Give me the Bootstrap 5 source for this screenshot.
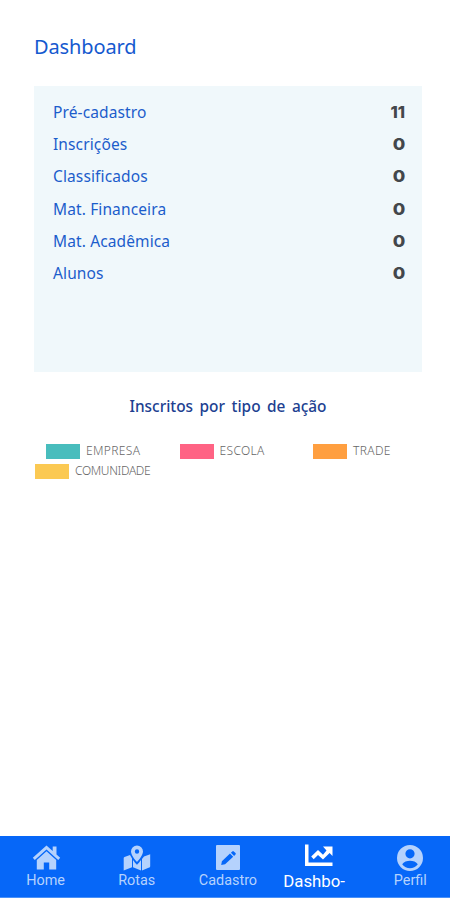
<!DOCTYPE html>
<html lang="pt-BR">
<head>
<meta charset="utf-8">
<meta name="viewport" content="width=device-width, initial-scale=1">
<title>Dashboard</title>
<link href="https://cdn.jsdelivr.net/npm/bootstrap@5.3.0/dist/css/bootstrap.min.css" rel="stylesheet">
<style>
body{font-family:"Noto Sans",sans-serif;background:#fff;overflow:hidden}
.screen{height:900px;padding-bottom:2.500px}
.content{padding:33px 28px 0 34px}
.page-title{font-size:20px;line-height:28px;color:#1559cf;letter-spacing:-.12px}
.summary{margin-top:24.500px;height:286px;background:#f0f8fb;padding:10.300px 17px 0 19px}
.stat{height:32.3px;font-size:15.500px;line-height:32px;color:#1c5dcb;letter-spacing:.12px}
.stat .value{font-family:Inter,sans-serif;font-weight:800;font-size:16.500px;line-height:33px;letter-spacing:0;color:#43474b}
.stat .digit{transform:scaleX(1.1);transform-origin:right}
.chart-title{margin-top:23px;font-size:15.400px;line-height:24px;color:#213f91;word-spacing:2.500px;font-weight:500}
.legend{margin-top:22.500px;font-size:12px;font-weight:300;color:#666;line-height:20px}
.legend-cell{width:133.500px;padding-left:12px;letter-spacing:.35px}
.legend-wide{padding-left:1px;letter-spacing:-.35px}
.swatch{width:34px;height:15px;margin-right:6px}
.swatch-teal{background:#48bdbd}.swatch-pink{background:#ff6384}.swatch-orange{background:#ff9f40}.swatch-yellow{background:#fbc953}
.tabs{height:62px;background:#0667f8;font-family:Roboto,sans-serif;border-bottom:1px solid #4a91f8}
.tab{width:91.2px;flex:none;color:#b5d2fd;font-size:14.400px;line-height:18px;padding-top:8.500px;text-decoration:none}
.tab svg{height:28px;display:block}
.tab.current{color:#fff;font-size:16.800px;padding-top:6px}
.current .tab-label{margin-right:10px;margin-top:2.500px}
</style>
</head>
<body>
<div class="screen d-flex flex-column">
<main class="content flex-grow-1">
  <h1 class="page-title fw-normal mb-0">Dashboard</h1>
  <section class="summary">
    <div class="stat d-flex justify-content-between"><span>Pré-cadastro</span><span class="value">11</span></div>
    <div class="stat d-flex justify-content-between"><span>Inscrições</span><span class="value digit">0</span></div>
    <div class="stat d-flex justify-content-between"><span>Classificados</span><span class="value digit">0</span></div>
    <div class="stat d-flex justify-content-between"><span>Mat. Financeira</span><span class="value digit">0</span></div>
    <div class="stat d-flex justify-content-between"><span>Mat. Acadêmica</span><span class="value digit">0</span></div>
    <div class="stat d-flex justify-content-between"><span>Alunos</span><span class="value digit">0</span></div>
  </section>
  <h2 class="chart-title text-center mb-0">Inscritos por tipo de ação</h2>
  <div class="legend">
    <div class="d-flex">
      <div class="legend-cell d-flex align-items-center flex-shrink-0"><span class="swatch swatch-teal"></span><span>EMPRESA</span></div>
      <div class="legend-cell d-flex align-items-center flex-shrink-0"><span class="swatch swatch-pink"></span><span>ESCOLA</span></div>
      <div class="legend-cell d-flex align-items-center flex-shrink-0"><span class="swatch swatch-orange"></span><span>TRADE</span></div>
    </div>
    <div class="legend-wide d-flex align-items-center"><span class="swatch swatch-yellow"></span><span>COMUNIDADE</span></div>
  </div>
</main>
<nav class="tabs d-flex">
  <a class="tab d-flex flex-column align-items-center" href="#"><svg width="30" viewBox="0 0 30 28" fill="currentColor"><path d="M15.500 1.500 1.800 13.700l2 2.300L15.500 5.600 27.200 16l2-2.300-3.700-3.200V2.500h-3.800v4.600z"/><path d="M15.500 7.300 5.800 16v9.500h7v-7h5.400v7h7V16z"/></svg><span class="tab-label">Home</span></a>
  <a class="tab d-flex flex-column align-items-center" href="#"><svg width="28" viewBox="0 0 28 28" fill="currentColor"><path fill-rule="evenodd" d="M14 1.500a6 6 0 0 0-6 6c0 3.500 4 8.500 6 10.500 2-2 6-7 6-10.500a6 6 0 0 0-6-6m0 3.800a2.200 2.200 0 1 1 0 4.400 2.200 2.200 0 0 1 0-4.400"/><path d="M7 11 1.500 13a1.200 1.200 0 0 0-.8 1.100V26.500l8.300-3.300v-8.700zM10 16v7.200l8 3.200V16c-1.300 2-4 4.800-4 4.800S11.300 18 10 16M19 15v11.500l7.200-2.900a1.500 1.500 0 0 0 1-1.400V10.200L21 12.500z"/></svg><span class="tab-label">Rotas</span></a>
  <a class="tab d-flex flex-column align-items-center" href="#"><svg width="26" viewBox="0 0 26 28" fill="currentColor"><path fill-rule="evenodd" d="M2 1h22a1 1 0 0 1 1 1v23a1 1 0 0 1-1 1H2a1 1 0 0 1-1-1V2a1 1 0 0 1 1-1m4.200 20 3.900-.7L18.200 12.700l-3.200-3.200-8.100 7.800zM15.900 8.700l3.200 3.200 1.400-1.300q.7-.8 0-1.500l-1.700-1.700q-.8-.7-1.500 0z"/></svg><span class="tab-label">Cadastro</span></a>
  <a class="tab current d-flex flex-column align-items-center" href="#"><svg width="30" viewBox="0 0 30 28" fill="currentColor"><path d="M1 2.500h3.500V20.500H28.500V24H1zM19 4.500h9.500V14l-2.900-2.900-6.600 6.500-5-4.600-4.300 4.200-2.500-2.600L14 8.100l5 4.600 3.500-4.300z"/></svg><span class="tab-label">Dashbo-</span></a>
  <a class="tab d-flex flex-column align-items-center" href="#"><svg width="28" viewBox="0 0 28 28" fill="currentColor"><path fill-rule="evenodd" d="M14 1a13 13 0 1 0 0 26 13 13 0 0 0 0-26m0 4.200a4.600 4.600 0 1 1 0 9.200 4.600 4.600 0 0 1 0-9.200M6.200 20.300c1.500-2.400 4.800-3.500 7.800-3.500s6.300 1.100 7.800 3.500c-2 2.500-4.800 4-7.800 4s-5.800-1.500-7.800-4"/></svg><span class="tab-label">Perfil</span></a>
</nav>
</div>
<script src="https://cdn.jsdelivr.net/npm/bootstrap@5.3.0/dist/js/bootstrap.bundle.min.js"></script>
</body>
</html>
